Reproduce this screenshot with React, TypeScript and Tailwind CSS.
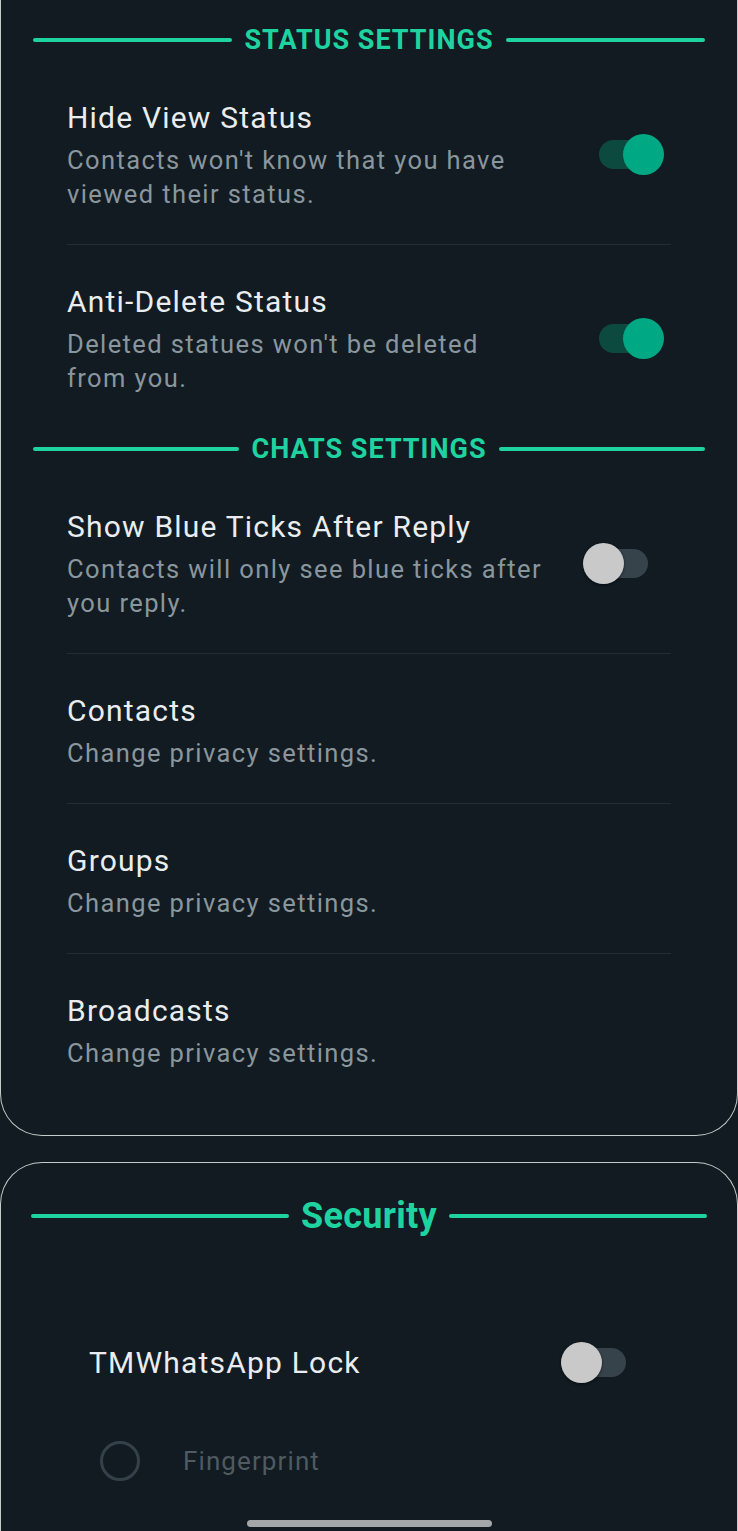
import React from 'react';

interface SettingItem {
  title: string;
  lines: string[];
  toggle?: 'on' | 'off';
}

const statusItems: SettingItem[] = [
  { title: 'Hide View Status', lines: ["Contacts won't know that you have", 'viewed their status.'], toggle: 'on' },
  { title: 'Anti-Delete Status', lines: ["Deleted statues won't be deleted", 'from you.'], toggle: 'on' },
];

const chatItems: SettingItem[] = [
  { title: 'Show Blue Ticks After Reply', lines: ['Contacts will only see blue ticks after', 'you reply.'], toggle: 'off' },
  { title: 'Contacts', lines: ['Change privacy settings.'] },
  { title: 'Groups', lines: ['Change privacy settings.'] },
  { title: 'Broadcasts', lines: ['Change privacy settings.'] },
];

function SectionHeader({ label, big }: { label: string; big?: boolean }) {
  return (
    <div className={`flex h-[42px] items-center ${big ? 'gap-[12px] px-[30px]' : 'gap-[12px] px-[32px]'}`}>
      <div className="h-[4px] flex-1 rounded-full bg-[#1fd3a1]" />
      <span
        className={`font-bold leading-none text-[#1fd3a1] ${
          big ? 'text-[36px] tracking-[0.3px]' : 'text-[27px] tracking-[1px]'
        }`}
      >
        {label}
      </span>
      <div className="h-[4px] flex-1 rounded-full bg-[#1fd3a1]" />
    </div>
  );
}

function Toggle({ on }: { on: boolean }) {
  return (
    <div className="relative h-[41px] w-[81px] shrink-0">
      <div
        className={`absolute top-[6px] h-[29px] w-[59px] rounded-full ${
          on ? 'left-[16px] bg-[#0c4a3f]' : 'left-[6px] bg-[#37434b]'
        }`}
      />
      <div
        className={`absolute top-0 h-[41px] w-[41px] rounded-full ${
          on ? 'right-0 bg-[#00a884]' : 'left-0 bg-[#c9c9c9] shadow-[0_1px_3px_rgba(0,0,0,0.6)]'
        }`}
      />
    </div>
  );
}

function SettingRow({ item, divider }: { item: SettingItem; divider: boolean }) {
  return (
    <div
      className={`flex items-center justify-between pb-[33px] pr-[7px] pt-[37px] ${
        divider ? 'border-b border-[#222d34]' : ''
      }`}
    >
      <div>
        <div className="text-[30px] leading-[40px] tracking-[1.2px] text-[#e9edef]">{item.title}</div>
        <div className="mt-[5px] text-[25.5px] leading-[34px] tracking-[1.4px] text-[#8a969d]">
          {item.lines.map((line) => (
            <div key={line} className="whitespace-nowrap">
              {line}
            </div>
          ))}
        </div>
      </div>
      {item.toggle && <Toggle on={item.toggle === 'on'} />}
    </div>
  );
}

export default function App() {
  return (
    <div
      className="relative flex h-[1531px] w-full flex-col overflow-hidden bg-[#111b21]"
      style={{ fontFamily: 'Roboto, "Noto Sans", sans-serif' }}
    >
      {/* Privacy card (top cut off) */}
      <div className="shrink-0 rounded-b-[42px] border-[1.5px] border-t-0 border-[#c5cacc] pb-[32px] pt-[19px]">
        <SectionHeader label="STATUS SETTINGS" />
        <div className="mx-[66px]">
          {statusItems.map((item, i) => (
            <SettingRow key={item.title} item={item} divider={i < statusItems.length - 1} />
          ))}
        </div>
        <SectionHeader label="CHATS SETTINGS" />
        <div className="mx-[66px]">
          {chatItems.map((item, i) => (
            <SettingRow key={item.title} item={item} divider={i < chatItems.length - 1} />
          ))}
        </div>
      </div>

      {/* Security card */}
      <div className="mt-[26px] flex-1 rounded-t-[42px] border-[1.5px] border-b-0 border-[#c5cacc] pt-[32px]">
        <SectionHeader label="Security" big />
        <div className="mt-[95px] flex h-[60px] items-center justify-between pl-[88px] pr-[95px]">
          <span className="text-[30px] tracking-[1.2px] text-[#e9edef]">TMWhatsApp Lock</span>
          <Toggle on={false} />
        </div>
        <div className="mt-[49px] flex items-center gap-[43px] pl-[99px]">
          <div className="h-[40px] w-[40px] rounded-full border-[3px] border-[#354148]" />
          <span className="text-[26px] tracking-[1.1px] text-[#4f5a61]">Fingerprint</span>
        </div>
      </div>

      {/* gesture bar */}
      <div className="absolute bottom-[4px] left-[247px] h-[7px] w-[245px] rounded-full bg-[#a3a7aa]" />
    </div>
  );
}
